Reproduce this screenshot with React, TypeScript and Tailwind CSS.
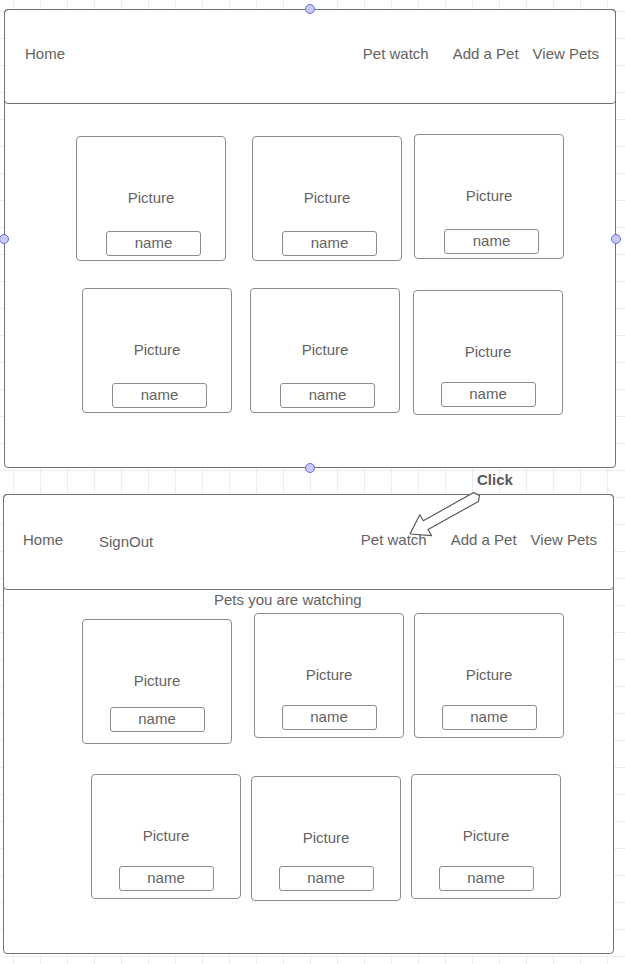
const font = { fontFamily: '"Liberation Sans", Arial, sans-serif' }

type CardProps = {
  box: string
  nameTop: string
}

const Card = ({ box, nameTop }: CardProps) => {
  return (
    <div className={`w-[150px] h-[125px] shrink-0 border border-[#8c8c8c] rounded-[4px] flex flex-col items-center bg-white ${box}`}>
      <div className="pt-[52px] text-[15px] leading-[18px] text-[#636363]">Picture</div>
      <div className={`w-[95px] h-[25px] border border-[#8c8c8c] rounded-[3px] flex items-center justify-center text-[15px] text-[#636363] ${nameTop}`}>
        name
      </div>
    </div>
  )
}

const Handle = ({ pos }: { pos: string }) => (
  <div className={`absolute w-[10px] h-[10px] rounded-full bg-[#c9c9fb] border border-[#6a6ae0] ${pos}`}></div>
)

export default function App() {
  return (
    <div
      style={font}
      className="relative w-[625px] h-[964px] overflow-hidden bg-white bg-[linear-gradient(to_right,#ededed_1px,transparent_1px),linear-gradient(to_bottom,#ededed_1px,transparent_1px)] [background-size:27px_27px] [background-position:13px_11px] pt-[9px]"
    >
      {/* Frame 1 */}
      <div className="relative ml-[4px] w-[612px] h-[459px] border border-[#737373] rounded-[4px] bg-white">
        <div className="-mx-px -mt-px h-[95px] border border-[#737373] rounded-[4px] flex items-center pl-[20px] pr-[16px] text-[15px] text-[#636363]">
          <span className="-mt-[4px]">Home</span>
          <span className="ml-auto -mt-[4px]">Pet watch</span>
          <span className="ml-[24px] -mt-[4px]">Add a Pet</span>
          <span className="ml-[14px] -mt-[4px]">View Pets</span>
        </div>
        <div className="flex items-start mt-[30px]">
          <Card box="ml-[71px] mt-[2px]" nameTop="mt-[24px] ml-[5px]" />
          <Card box="ml-[26px] mt-[2px]" nameTop="mt-[24px] ml-[5px]" />
          <Card box="ml-[12px]" nameTop="mt-[24px] ml-[5px]" />
        </div>
        <div className="flex items-start mt-[27px]">
          <Card box="ml-[77px]" nameTop="mt-[24px] ml-[5px]" />
          <Card box="ml-[18px]" nameTop="mt-[24px] ml-[5px]" />
          <Card box="ml-[13px] mt-[2px]" nameTop="mt-[21px]" />
        </div>
        <Handle pos="left-[300px] -top-[6px]" />
        <Handle pos="-left-[6px] top-[224px]" />
        <Handle pos="-right-[6px] top-[224px]" />
        <Handle pos="left-[300px] -bottom-[6px]" />
      </div>

      {/* Frame 2 */}
      <div className="relative mt-[26px] ml-[3px] w-[611px] h-[460px] border border-[#737373] rounded-[4px] bg-white">
        <div className="-mx-px -mt-px h-[96px] border border-[#737373] rounded-[4px] flex items-center pl-[19px] pr-[16px] text-[15px] text-[#636363]">
          <span className="-mt-[3px]">Home</span>
          <span className="ml-[36px] mt-[1px]">SignOut</span>
          <span className="ml-auto -mt-[3px]">Pet watch</span>
          <span className="ml-[24px] -mt-[3px]">Add a Pet</span>
          <span className="ml-[14px] -mt-[3px]">View Pets</span>
        </div>
        <div className="ml-[210px] mt-[1px] text-[15px] leading-[18px] text-[#636363]">Pets you are watching</div>
        <div className="flex items-start mt-[4px]">
          <Card box="ml-[78px] mt-[6px]" nameTop="mt-[17px]" />
          <Card box="ml-[22px]" nameTop="mt-[21px]" />
          <Card box="ml-[10px]" nameTop="mt-[21px]" />
        </div>
        <div className="flex items-start mt-[30px]">
          <Card box="ml-[87px]" nameTop="mt-[21px]" />
          <Card box="ml-[10px] mt-[2px]" nameTop="mt-[19px]" />
          <Card box="ml-[10px]" nameTop="mt-[21px]" />
        </div>
      </div>

      {/* Click annotation */}
      <div className="absolute left-[477px] top-[471px] text-[15px] leading-[18px] font-bold text-[#5a5a5a]">Click</div>
      <svg className="absolute left-0 top-0 pointer-events-none" width="625" height="964">
        <polygon
          points="473.6,492.6 423.3,520.8 419.8,514.7 410,534 431.6,535.7 428.1,529.6 478.4,501.4 479.5,495.5"
          fill="white"
          stroke="#5a5a5a"
          strokeWidth="1.2"
          strokeLinejoin="round"
        />
      </svg>
    </div>
  )
}
